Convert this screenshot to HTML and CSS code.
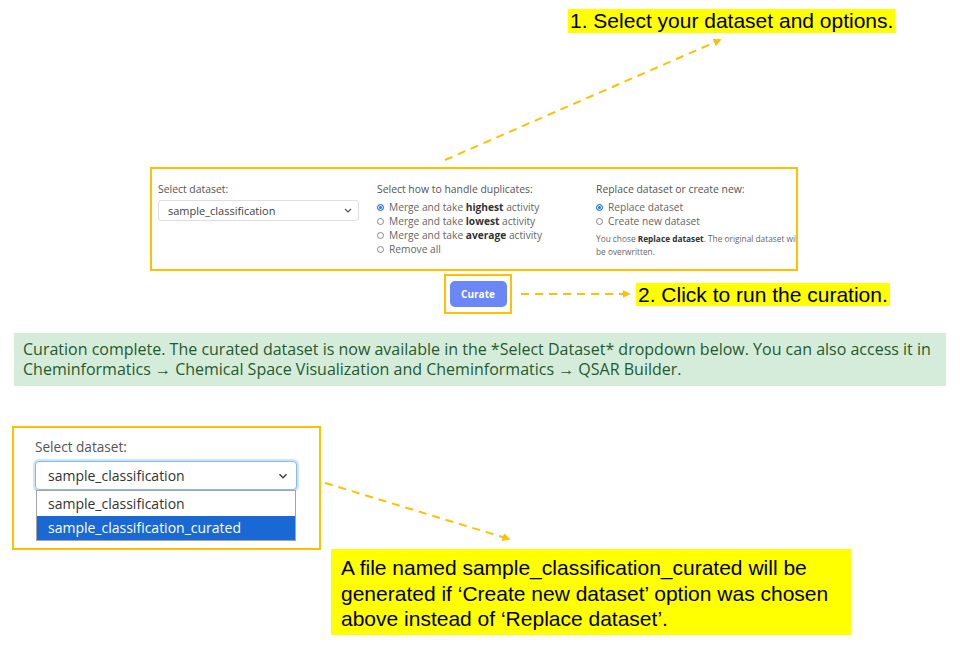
FILE: index.html
```html
<!DOCTYPE html>
<html>
<head>
<meta charset="utf-8">
<link rel="stylesheet" href="styles.css">
</head>
<body>
<div class="page">
  <div class="note step1">1. Select your dataset and options.</div>

  <section class="panel">
    <div class="col">
      <div class="lbl">Select dataset:</div>
      <div class="sel sm">
        <span>sample_classification</span>
        <svg class="chev" width="8" height="5" viewBox="0 0 8 5"><path d="M1 1l3 3 3-3" fill="none" stroke="#555" stroke-width="1.2"/></svg>
      </div>
    </div>
    <div class="col">
      <div class="lbl">Select how to handle duplicates:</div>
      <ul class="opts">
        <li><span class="radio on"></span>Merge and take <b>highest</b> activity</li>
        <li><span class="radio"></span>Merge and take <b>lowest</b> activity</li>
        <li><span class="radio"></span>Merge and take <b>average</b> activity</li>
        <li><span class="radio"></span>Remove all</li>
      </ul>
    </div>
    <div class="col">
      <div class="lbl">Replace dataset or create new:</div>
      <ul class="opts">
        <li><span class="radio on"></span>Replace dataset</li>
        <li><span class="radio"></span>Create new dataset</li>
      </ul>
      <p class="hint">You chose <b>Replace dataset</b>. The original dataset will be overwritten.</p>
    </div>
  </section>

  <div class="curate-row">
    <div class="hl-box"><button class="btn">Curate</button></div>
    <div class="note step2">2. Click to run the curation.</div>
  </div>

  <div class="alert">Curation complete. The curated dataset is now available in the *Select Dataset* dropdown below. You can also access it in Cheminformatics → Chemical Space Visualization and Cheminformatics → QSAR Builder.</div>

  <div class="bottom-row">
    <div class="panel2">
      <div class="lbl2">Select dataset:</div>
      <div class="sel lg">
        <span>sample_classification</span>
        <svg class="chev" width="10" height="6" viewBox="0 0 10 6"><path d="M1.5 1.2l3.5 3.5 3.5-3.5" fill="none" stroke="#444" stroke-width="1.5"/></svg>
      </div>
      <ul class="dropdown">
        <li>sample_classification</li>
        <li class="active">sample_classification_curated</li>
      </ul>
    </div>
    <div class="note step3">A file named sample_classification_curated will be generated if ‘Create new dataset’ option was chosen above instead of ‘Replace dataset’.</div>
  </div>

  <svg class="arrows" width="960" height="645" viewBox="0 0 960 645">
    <defs>
      <marker id="ah" viewBox="0 0 10 10" refX="8" refY="5" markerWidth="4" markerHeight="4" orient="auto">
        <path d="M0 0L10 5L0 10z" fill="#FFC000"/>
      </marker>
    </defs>
    <g fill="none" stroke="#FFC000" stroke-width="2" stroke-dasharray="8 6" marker-end="url(#ah)">
      <line x1="445" y1="160" x2="720" y2="40"/>
      <line x1="521" y1="294" x2="629" y2="294"/>
      <line x1="325" y1="483" x2="509" y2="539"/>
    </g>
  </svg>
</div>
</body>
</html>
```

FILE: styles.css
```css
* { box-sizing: border-box; }
html, body { margin: 0; padding: 0; background: #fff; }
.page {
  position: relative;
  width: 960px;
  height: 645px;
  overflow: hidden;
  display: flex;
  flex-direction: column;
  align-items: flex-start;
  font-family: "Open Sans", "Noto Sans", sans-serif;
}
.note {
  background: #ffff00;
  color: #000;
  font-family: "Liberation Sans", Arial, sans-serif;
  font-size: 21px;
  white-space: nowrap;
}
.step1 {
  margin: 9px 0 0 568px;
  height: 24px;
  line-height: 24px;
  padding: 0 2px;
}
.panel {
  margin: 134px 0 0 150px;
  width: 648px;
  height: 104px;
  border: 2px solid #FFC000;
  display: grid;
  grid-template-columns: 201px 201px 201px;
  column-gap: 18px;
  padding: 13px 0 0 6px;
  overflow: hidden;
  color: #555;
}
.lbl {
  font-size: 10.4px;
  line-height: 14px;
  color: #555;
  white-space: nowrap;
}
.sel {
  display: flex;
  align-items: center;
  justify-content: space-between;
  background: #fff;
  color: #444;
}
.sel.sm {
  margin-top: 4px;
  height: 21px;
  border: 1px solid #dedede;
  border-radius: 3px;
  padding: 0 6px 0 9px;
  font-size: 11px;
}
.opts {
  list-style: none;
  margin: 4px 0 0;
  padding: 0;
}
.opts li {
  display: flex;
  align-items: center;
  height: 14px;
  font-size: 10.2px;
  color: #666;
  white-space: pre;
}
.opts b { color: #333; font-weight: 700; }
.radio {
  width: 7px;
  height: 7px;
  border: 1px solid #888;
  border-radius: 50%;
  margin-right: 5px;
  flex: none;
}
.radio.on {
  border-color: #1a73e8;
  background: #1a73e8;
  box-shadow: inset 0 0 0 1px #fff;
}
.hint {
  margin: 4px 0 0;
  font-size: 8.3px;
  line-height: 13px;
  color: #666;
  width: 206px;
}
.hint b { color: #333; }
.curate-row {
  display: flex;
  align-items: center;
  margin: 3px 0 0 444px;
}
.hl-box {
  width: 68px;
  height: 40px;
  border: 2px solid #FFC000;
  display: flex;
  align-items: center;
  justify-content: center;
}
.btn {
  width: 57px;
  height: 26px;
  border: none;
  border-radius: 5px;
  background: #6b86f5;
  color: #fff;
  font-family: inherit;
  font-size: 10px;
  font-weight: 700;
  padding: 0;
}
.step2 {
  margin-left: 124px;
  height: 23px;
  line-height: 23px;
  padding: 0 2px;
}
.alert {
  margin: 19px 0 0 14px;
  width: 932px;
  height: 53px;
  background: #d5ecda;
  color: #1f5b2d;
  font-size: 16px;
  line-height: 20px;
  padding: 6px 9px;
}
.bottom-row {
  display: flex;
  align-items: flex-start;
  margin: 40px 0 0 12px;
}
.panel2 {
  width: 309px;
  height: 124px;
  border: 2px solid #FFC000;
  padding: 10px 0 0 21px;
}
.lbl2 {
  font-size: 13.6px;
  line-height: 18px;
  color: #555;
}
.sel.lg {
  margin-top: 5px;
  width: 262px;
  height: 29px;
  border: 1px solid #86b7fe;
  border-radius: 4px;
  box-shadow: 0 0 0 2px rgba(13, 110, 253, 0.2);
  padding: 0 8px 0 12px;
  font-size: 14px;
  color: #333;
}
.dropdown {
  list-style: none;
  margin: 0 0 0 1px;
  padding: 0;
  width: 260px;
  border: 1px solid #a5a5a5;
  background: #fff;
  font-size: 14px;
  color: #333;
}
.dropdown li {
  height: 25px;
  line-height: 25px;
  padding-left: 11px;
}
.dropdown li.active {
  height: 24px;
  line-height: 24px;
  background: #1a68d4;
  color: #fff;
}
.step3 {
  margin: 123px 0 0 10px;
  width: 520px;
  height: 86px;
  padding: 6px 10px;
  font-size: 21px;
  line-height: 25.5px;
  white-space: normal;
}
.arrows {
  position: absolute;
  left: 0;
  top: 0;
  pointer-events: none;
}
```
